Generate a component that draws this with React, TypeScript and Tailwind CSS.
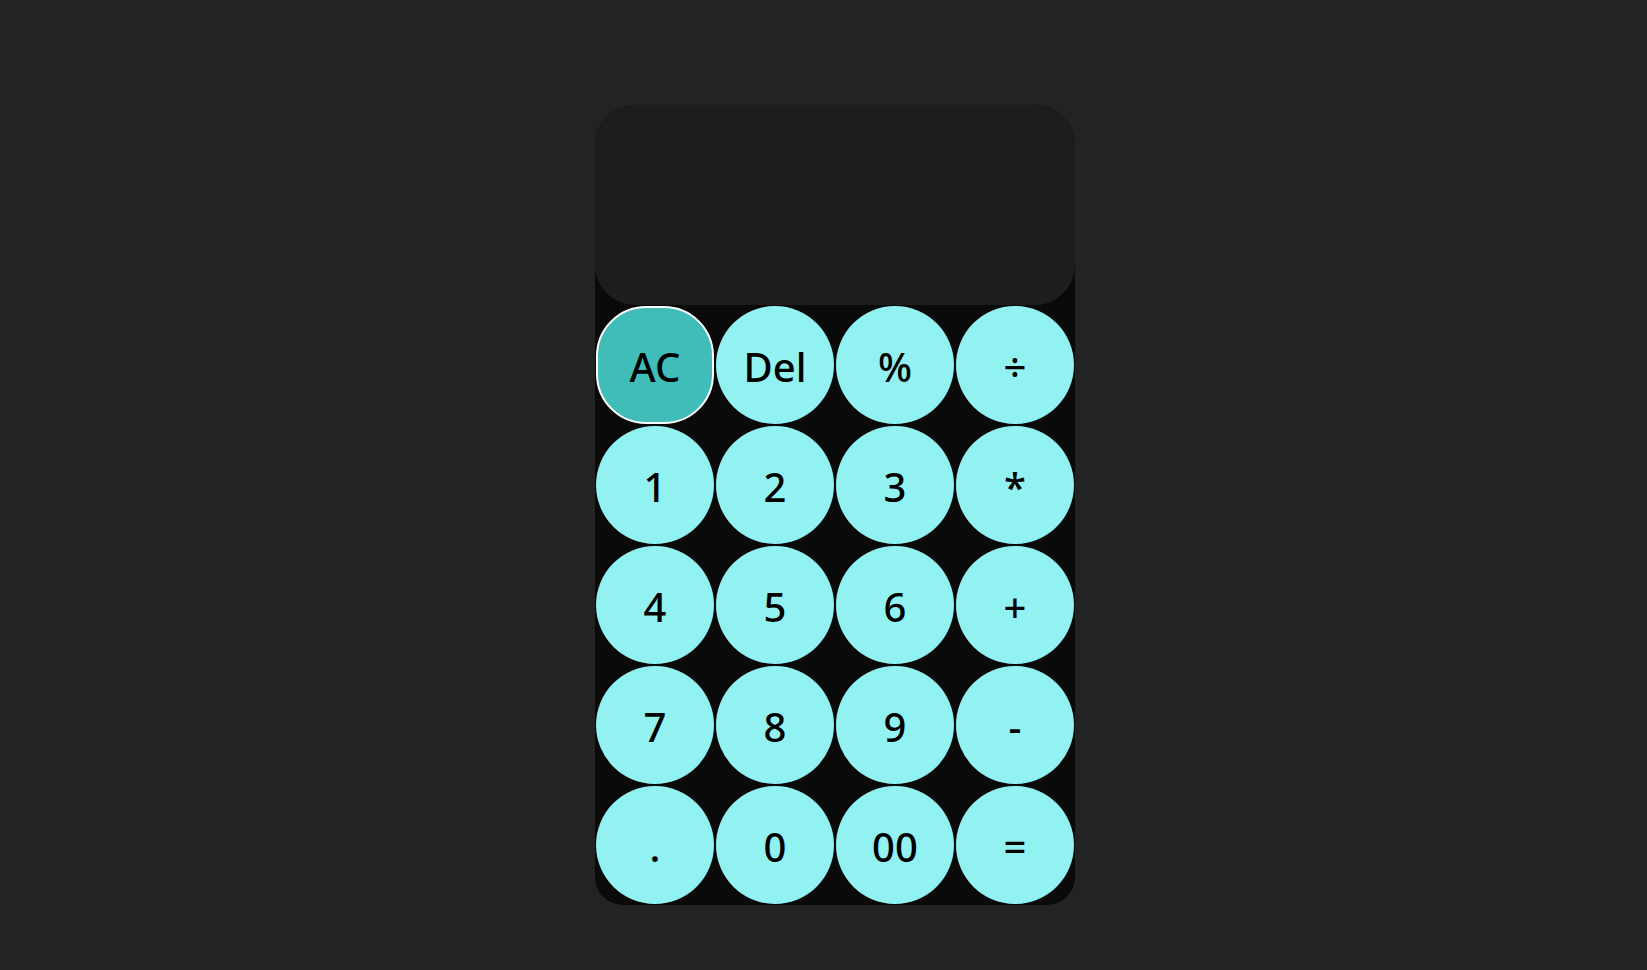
const keys = ['AC', 'Del', '%', '÷', '1', '2', '3', '*', '4', '5', '6', '+', '7', '8', '9', '-', '.', '0', '00', '=']

export default function App() {
  return (
    <div className="min-h-screen bg-[#232323] flex justify-center pt-[105px] pl-[23px] font-['Noto_Sans','Open_Sans',sans-serif]">
      <div className="w-[480px] h-[800px] bg-[#0a0a0a] rounded-b-[28px] rounded-t-[40px] flex flex-col">
        {/* Display */}
        <div className="h-[200px] bg-[#1d1d1d] rounded-[40px]" />

        {/* Keypad */}
        <div className="grid grid-cols-4">
          {keys.map((k) => (
            <div key={k} className="h-[120px] flex items-center justify-center">
              <button
                className={
                  k === 'AC'
                    ? 'w-[118px] h-[118px] rounded-[50px] border-2 border-white bg-[#41bdb9] text-black text-[40px] font-medium leading-none pt-1'
                    : 'w-[118px] h-[118px] rounded-full bg-[#92f1f1] text-black text-[40px] font-medium leading-none pt-1'
                }
              >
                {k}
              </button>
            </div>
          ))}
        </div>
      </div>
    </div>
  )
}
